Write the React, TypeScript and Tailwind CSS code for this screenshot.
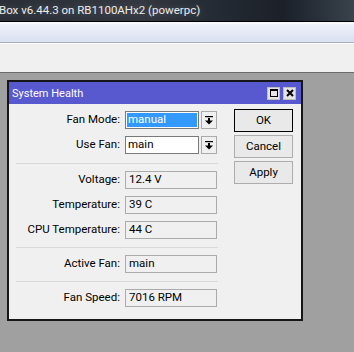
const FONT = "font-['Roboto','Liberation_Sans',sans-serif]";

function ReadOnly({ label, value }: { label: string; value: string }) {
  return (
    <div className="flex items-center h-[18px]">
      <div className="w-[111px] text-right leading-none">{label}</div>
      <div className="ml-[5px] w-[92px] h-[18px] border border-[#ababab] bg-[#f0f0f0] pl-[3px] flex items-center leading-none">
        {value}
      </div>
    </div>
  );
}

function DropArrow() {
  return (
    <svg width="8" height="9" viewBox="0 0 8 9">
      <rect x="0" y="0" width="8" height="1.2" fill="#000" />
      <rect x="3" y="2" width="2" height="3" fill="#000" />
      <polygon points="0,4.5 8,4.5 4,8.5" fill="#000" />
    </svg>
  );
}

function SelectRow({ label, value, selected }: { label: string; value: string; selected?: boolean }) {
  return (
    <div className="flex items-center h-[18px]">
      <div className="w-[111px] text-right leading-none">{label}</div>
      <div className="ml-[5px] w-[74px] h-[18px] border border-[#7a7a7a] bg-white p-px flex">
        {selected ? (
          <div className="flex-1 bg-[#3399ff] text-white pl-px flex items-center leading-none">{value}</div>
        ) : (
          <div className="flex-1 pl-px flex items-center leading-none">{value}</div>
        )}
      </div>
      <div className="ml-[2px] w-[16px] h-[18px] border border-[#ababab] bg-[#f0f0f0] flex items-center justify-center">
        <DropArrow />
      </div>
    </div>
  );
}

function Separator() {
  return <div className="ml-[7px] w-[202px] h-px bg-[#d9d9d9]" />;
}

export default function App() {
  return (
    <div className={`w-[354px] h-[352px] overflow-hidden bg-[#a0a0a0] ${FONT}`}>
      <div className="h-[21px] bg-[linear-gradient(90deg,#2b3038_0%,#343941_40%,#242a33_62%,#1b2029_80%,#2c343e_92%,#3a424c_100%)] flex items-center">
        <span className="-ml-[1px] text-[11.5px] text-[#ececec] leading-none [text-shadow:0_0_6px_#5a5f66]">
          Box v6.44.3 on RB1100AHx2 (powerpc)
        </span>
      </div>
      <div className="h-px bg-black" />
      <div className="h-[2px] bg-[#f7f9fd]" />
      <div className="h-[18px] bg-gradient-to-b from-[#eef2fa] to-[#d9e0f1]" />
      <div className="h-px bg-[#a7afc0]" />
      <div className="h-px bg-white" />
      <div className="h-[28px] bg-[#f0f0f0]" />
      <div className="h-px bg-[#6b6b6b]" />

      <div className="pt-[7px] pl-[7px]">
        <div className="w-[296px] h-[241px] border-2 border-[#161616] bg-[#f0f0f0] flex flex-col text-[11.5px] text-black">
          <div className="h-[22px] bg-[#5858cf] flex items-center justify-between pl-[3px] pr-[5px]">
            <span className="text-white text-[11px] leading-none">System Health</span>
            <div className="flex gap-[3px]">
              <div className="w-[13px] h-[13px] bg-[#e4e4e4] border border-[#bdbdbd] flex items-center justify-center">
                <div className="w-[8px] h-[8px] border border-black border-t-2" />
              </div>
              <div className="w-[13px] h-[13px] bg-[#e4e4e4] border border-[#bdbdbd] flex items-center justify-center">
                <svg width="8" height="8" viewBox="0 0 8 8">
                  <path d="M1 1 L7 7 M7 1 L1 7" stroke="#000" strokeWidth="2" />
                </svg>
              </div>
            </div>
          </div>

          <div className="flex pt-[7px]">
            <div className="w-[208px] flex flex-col">
              <div className="flex flex-col gap-[7px]">
                <SelectRow label="Fan Mode:" value="manual" selected />
                <SelectRow label="Use Fan:" value="main" />
              </div>
              <div className="mt-[9px] mb-[7px]">
                <Separator />
              </div>
              <div className="flex flex-col gap-[7px]">
                <ReadOnly label="Voltage:" value="12.4 V" />
                <ReadOnly label="Temperature:" value="39 C" />
                <ReadOnly label="CPU Temperature:" value="44 C" />
              </div>
              <div className="mt-[8px] mb-[7px]">
                <Separator />
              </div>
              <ReadOnly label="Active Fan:" value="main" />
              <div className="mt-[8px] mb-[7px]">
                <Separator />
              </div>
              <ReadOnly label="Fan Speed:" value="7016 RPM" />
            </div>

            <div className="ml-[17px] w-[59px] flex flex-col gap-[3px] -mt-[2px]">
              <div className="h-[23px] border border-black bg-[#e9e9e9] flex items-center justify-center">
                <span className="leading-none">OK</span>
              </div>
              <div className="h-[23px] border border-[#adadad] bg-[#e9e9e9] flex items-center justify-center">
                <span className="leading-none">Cancel</span>
              </div>
              <div className="h-[23px] border border-[#adadad] bg-[#e9e9e9] flex items-center justify-center">
                <span className="leading-none">Apply</span>
              </div>
            </div>
          </div>
        </div>
      </div>
    </div>
  );
}
